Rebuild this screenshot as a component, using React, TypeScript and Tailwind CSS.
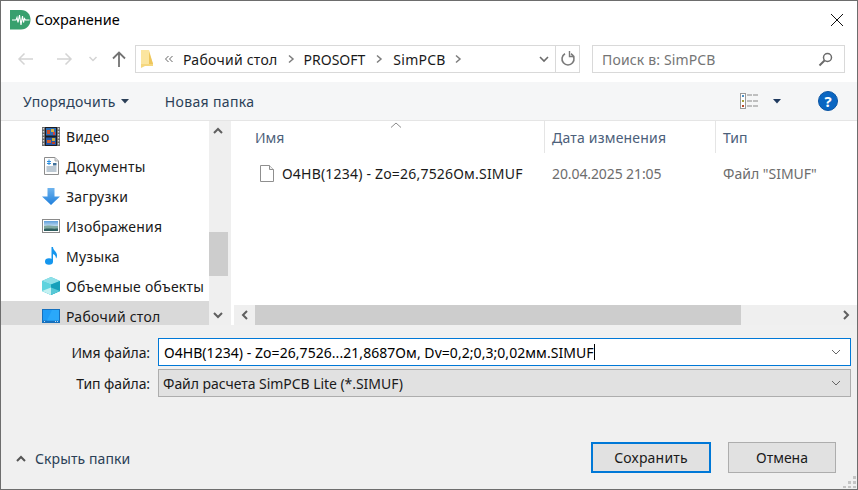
import React from "react";

const font = { fontFamily: '"Noto Sans", "Open Sans", sans-serif' };

const Logo = () => (
  <svg width="21" height="20" viewBox="0 0 21 20">
    <path d="M0 0H11C17 0 20.500 4.500 20.500 9.500C20.500 15 17 19.500 11 19.500H0Z" fill="#38a06e" />
    <path d="M2 10H6L7 7.500L8 12.500L9.500 5L11 15L12.500 6L13.500 12.500L14.500 8.500L15.500 10H19.500" fill="none" stroke="#fff" strokeWidth="1.100" />
  </svg>
);

const Chevron = ({ up = false, color = "#555", w = 1.6, size = 12 }: { up?: boolean; color?: string; w?: number; size?: number }) => (
  <svg width={size} height={size} viewBox="0 0 12 12">
    <path d={up ? "M2 8L6 4L10 8" : "M2 4L6 8L10 4"} fill="none" stroke={color} strokeWidth={w} />
  </svg>
);

const Crumb = ({ extra = "mx-[9px]" }: { extra?: string }) => (
  <svg width="8" height="10" viewBox="0 0 8 10" className={extra}>
    <path d="M2 1.500L6 5L2 8.500" fill="none" stroke="#7d7d7d" strokeWidth="1.500" />
  </svg>
);

const VideoIcon = () => (
  <svg width="18" height="19" viewBox="0 0 18 19">
    <rect width="18" height="19" fill="#6a6a6a" />
    <rect x="3" y="0" width="12" height="19" fill="#1c1c22" />
    <rect x="4" y="1" width="10" height="7.500" fill="#2f6fb5" />
    <rect x="4" y="10.500" width="10" height="7.500" fill="#2458a8" />
    <rect x="5" y="3" width="3" height="4" fill="#c8502a" />
    <rect x="9" y="2" width="3" height="3" fill="#d9b23a" />
    <rect x="11" y="5" width="2" height="3" fill="#c44" />
    <rect x="5" y="13" width="4" height="3" fill="#d2602f" />
    <rect x="10" y="11" width="3" height="3" fill="#c8b040" />
    <rect x="10" y="15" width="3" height="2" fill="#b8402a" />
    <path d="M1.500 1V18M16.500 1V18" stroke="#d8d8d8" strokeWidth="1.400" strokeDasharray="1.500 1.500" />
  </svg>
);
const DocIcon = () => (
  <svg width="15" height="18" viewBox="0 0 15 18">
    <path d="M.5 .5H11L14.500 4V17.500H.5Z" fill="#fdfdfd" stroke="#8c8c8c" />
    <path d="M11 .5V4H14.500" fill="#d8dde2" stroke="#aaa" />
    <path d="M3 4.500H7M3 6.500H7" stroke="#2d8fe0" strokeWidth="1.100" />
    <path d="M5 2.500V8" stroke="#2d8fe0" />
    <rect x="9" y="6" width="3.500" height="2.500" fill="#3f6f98" />
    <path d="M2.500 10H12.500M2.500 12H12.500M2.500 14H12.500" stroke="#7a93a8" />
  </svg>
);
const DownIcon = () => (
  <svg width="18" height="17" viewBox="0 0 18 17">
    <defs>
      <linearGradient id="dn" x1="0" y1="0" x2="0" y2="1">
        <stop offset="0" stopColor="#6fb4ee" />
        <stop offset="1" stopColor="#1f7fdc" />
      </linearGradient>
    </defs>
    <path d="M5.500 0H12.500V8.500H18L9 17L0 8.500H5.500Z" fill="url(#dn)" />
  </svg>
);
const ImgIcon = () => (
  <svg width="18" height="14" viewBox="0 0 18 14">
    <defs>
      <linearGradient id="sky" x1="0" y1="0" x2="0" y2="1">
        <stop offset="0" stopColor="#5f9fdc" />
        <stop offset="1" stopColor="#cfe4f2" />
      </linearGradient>
    </defs>
    <rect x=".5" y=".5" width="17" height="13" fill="#fff" stroke="#8a8a8a" />
    <rect x="2" y="2" width="14" height="6" fill="url(#sky)" />
    <path d="M2 7C6 5.500 11 7.500 16 7V12H2Z" fill="#7fa8a0" />
    <path d="M2 10C6 9 11 10 16 9.500V12H2Z" fill="#2f5f60" />
  </svg>
);
const MusicIcon = () => (
  <svg width="12" height="18" viewBox="0 0 12 18">
    <ellipse cx="4" cy="14.500" rx="4" ry="3.300" fill="#1596ee" />
    <path d="M6.500 15V0H8C8 3.500 12 4.500 12 8.500C12 10 11.500 11 11 11.500C11 9 9.500 7.500 8 7V15Z" fill="#1596ee" />
  </svg>
);
const CubeIcon = () => (
  <svg width="18" height="18" viewBox="0 0 18 18">
    <path d="M9 0L18 4V14L9 18L0 14V4Z" fill="#3fc3d3" />
    <path d="M9 0L18 4L9 7.500L0 4Z" fill="#8fe0e8" />
    <path d="M9 7.500L18 4V14L9 18Z" fill="#17a0ba" />
    <path d="M0 4L9 7.500V18L0 14Z" fill="#5ed3de" />
    <path d="M0 14L9 10.500V18Z" fill="#c4f1f2" />
    <path d="M18 14L9 10.500V18Z" fill="#57c8d6" />
  </svg>
);
const DesktopIcon = () => (
  <svg width="18" height="14" viewBox="0 0 18 14">
    <rect x="0" y="0" width="18" height="14" fill="#1670bd" />
    <rect x="1" y="1" width="16" height="10.500" fill="#1f9cf6" />
    <path d="M10 1H17V11.500H5Z" fill="#2aa8fa" />
    <path d="M13 12.500H13.800M15 12.500H15.800M2 12.500H2.800" stroke="#e8f4fc" />
  </svg>
);

const navItems: [string, React.ReactNode][] = [
  ["Видео", <VideoIcon />],
  ["Документы", <DocIcon />],
  ["Загрузки", <DownIcon />],
  ["Изображения", <ImgIcon />],
  ["Музыка", <MusicIcon />],
  ["Объемные объекты", <CubeIcon />],
  ["Рабочий стол", <DesktopIcon />],
];

export default function App() {
  return (
    <div style={font} className="w-[858px] h-[490px] border border-[#6d6d6d] bg-[#f0f0f0] flex flex-col overflow-hidden text-[14px] text-[#1a1a1a] relative">
      {/* title */}
      <div className="h-[38px] shrink-0 bg-white flex items-center pl-[9px]">
        <Logo />
        <span className="ml-[4px] text-[14.500px] text-black">Сохранение</span>
        <div className="ml-auto mr-[13px]">
          <svg width="14" height="14" viewBox="0 0 14 14">
            <path d="M1 1L13 13M13 1L1 13" stroke="#111" strokeWidth="1" />
          </svg>
        </div>
      </div>

      {/* nav */}
      <div className="h-[43px] shrink-0 bg-white flex items-start pt-[6px]">
        <div className="w-[134px] h-[28px] flex items-center shrink-0 pl-[16px]">
          <svg width="17" height="14" viewBox="0 0 17 14"><path d="M16 7H2M7.500 1.500L2 7L7.500 12.500" fill="none" stroke="#d4d4d4" strokeWidth="1.500" /></svg>
          <svg width="17" height="14" viewBox="0 0 17 14" className="ml-[22px]"><path d="M1 7H15M9.500 1.500L15 7L9.500 12.500" fill="none" stroke="#d4d4d4" strokeWidth="1.500" /></svg>
          <svg width="10" height="8" viewBox="0 0 10 8" className="ml-[15px]"><path d="M1.500 2L5 5.500L8.500 2" fill="none" stroke="#d4d4d4" strokeWidth="1.500" /></svg>
          <svg width="14" height="17" viewBox="0 0 14 17" className="ml-[14px]"><path d="M7 16V2M1 7.500L7 1.500L13 7.500" fill="none" stroke="#737373" strokeWidth="1.800" /></svg>
        </div>
        <div className="w-[445px] h-[28px] border border-[#d9d9d9] flex items-center shrink-0">
          <svg width="13" height="18" viewBox="0 0 13 18" className="ml-[5px]">
            <path d="M0 0H8L12 14V16H4L0 18Z" fill="#f5d77e" />
            <path d="M0 0H8V14H0Z" fill="#fbe59f" />
            <path d="M8 2L12 14H8Z" fill="#eec65c" />
          </svg>
          <svg width="10" height="10" viewBox="0 0 10 10" className="ml-[10px]">
            <path d="M4.500 2L1.500 5L4.500 8M8.500 2L5.500 5L8.500 8" fill="none" stroke="#666" strokeWidth="1" />
          </svg>
          <span className="ml-[9px] tracking-[0.25px]">Рабочий стол</span>
          <Crumb />
          <span>PROSOFT</span>
          <Crumb extra="ml-[10px] mr-[10px]" />
          <span className="tracking-[0.25px]">SimPCB</span>
          <Crumb extra="ml-[8px]" />
          <div className="ml-auto h-full flex items-center">
            <Chevron color="#6b6b6b" size={12} />
            <div className="ml-[5px] w-[24px] h-full border-l border-[#d9d9d9] flex items-center justify-center">
              <svg width="16" height="16" viewBox="0 0 16 16">
                <path d="M5 2.800A6 6 0 1 0 11 2.800" fill="none" stroke="#7a7a7a" strokeWidth="1.600" />
                <path d="M9.500 0V5.500H14.500" fill="none" stroke="#7a7a7a" strokeWidth="1.400" />
              </svg>
            </div>
          </div>
        </div>
        <div className="ml-[12px] w-[253px] h-[28px] border border-[#d9d9d9] flex items-center pl-[9px] pr-[11px] text-[#757575]">
          <span className="tracking-[0.15px]">Поиск в: SimPCB</span>
          <svg width="15" height="15" viewBox="0 0 15 15" className="ml-auto">
            <circle cx="9.500" cy="5.500" r="4" fill="none" stroke="#6b6b6b" strokeWidth="1.500" />
            <path d="M6.500 8.500L1.500 13.500" stroke="#6b6b6b" strokeWidth="2" />
          </svg>
        </div>
      </div>

      {/* toolbar */}
      <div className="h-[39px] shrink-0 bg-[#f5f6f7] border-b border-[#e5e5e5] flex items-center pl-[22px] text-[#2b3f57]">
        <span className="tracking-[0.3px]">Упорядочить</span>
        <svg width="8" height="5" viewBox="0 0 8 5" className="ml-[5px]"><path d="M0 0H8L4 4.500Z" fill="#2b3f57" /></svg>
        <span className="ml-[36px] tracking-[0.35px]">Новая папка</span>
        <div className="ml-auto flex items-center">
          <svg width="20" height="16" viewBox="0 0 20 16">
            <rect x=".5" y=".5" width="5" height="15" fill="#fff" stroke="#999" />
            <rect x="2" y="2" width="2" height="2" fill="#4d8fc4" />
            <rect x="2" y="7" width="2" height="2" fill="#a8a03a" />
            <rect x="2" y="12" width="2" height="2" fill="#b84a2a" />
            <path d="M7 2H19M7 8H19M7 13H19" stroke="#888" strokeDasharray="5 1" />
          </svg>
          <svg width="8" height="5" viewBox="0 0 8 5" className="ml-[13px]"><path d="M0 0H8L4 4.500Z" fill="#1f3a5f" /></svg>
          <div className="ml-[37px] mr-[19px] w-[20px] h-[20px] rounded-full bg-[#0a66c2] border border-[#0b55a3] text-white text-[15px] font-bold flex items-center justify-center leading-none">?</div>
        </div>
      </div>

      {/* panes */}
      <div className="h-[204px] shrink-0 flex bg-white">
        <div className="w-[208px] shrink-0 overflow-hidden tracking-[0.25px]">
          {navItems.map(([label, icon], i) => (
            <div key={label} className={`h-[30px] flex items-center ${i === 6 ? "bg-[#d9d9d9]" : ""}`}>
              <div className="w-[18px] ml-[41px] flex items-center justify-center">{icon}</div>
              <span className="ml-[6px] whitespace-nowrap">{label}</span>
            </div>
          ))}
        </div>
        <div className="w-[22px] shrink-0 bg-[#efefef] flex flex-col items-start justify-between relative py-[4px] pl-[3px]">
          <Chevron up color="#5f5f5f" w={2} />
          <div className="absolute left-0 w-[19px] top-[111px] h-[44px] bg-[#cdcdcd]" />
          <Chevron color="#5f5f5f" w={2} />
        </div>
        <div className="flex-1 flex flex-col ml-[3px] min-w-0">
          <div className="flex-1 min-h-0">
            <div className="h-[32px] flex text-[#4c607a] relative">
              <svg width="12" height="6" viewBox="0 0 12 6" className="absolute left-[156px] top-[1px]"><path d="M1 5.500L6 1L11 5.500" fill="none" stroke="#8a8a8a" /></svg>
              <div className="w-[311px] pl-[21px] flex items-center border-r border-[#e5e5e5]">Имя</div>
              <div className="w-[171px] pl-[7px] flex items-center border-r border-[#e5e5e5] tracking-[0.2px]">Дата изменения</div>
              <div className="pl-[7px] flex items-center">Тип</div>
            </div>
            <div className="h-[22px] mt-[9px] flex items-center">
              <div className="w-[48px] shrink-0 flex justify-end pr-[8px]">
                <svg width="14" height="17" viewBox="0 0 14 17">
                  <path d="M.5 .5H9.500L13.500 4.500V16.500H.5Z" fill="#fff" stroke="#8f8f8f" />
                  <path d="M9.500 .5V4.500H13.500" fill="#eee" stroke="#8f8f8f" />
                </svg>
              </div>
              <div className="w-[270px] shrink-0 whitespace-nowrap tracking-[0.2px]">О4НВ(1234) - Zo=26,7526Ом.SIMUF</div>
              <div className="w-[171px] shrink-0 text-[#6d6d6d] whitespace-nowrap tracking-[-0.1px]">20.04.2025 21:05</div>
              <div className="text-[#6d6d6d] whitespace-nowrap">Файл "SIMUF"</div>
            </div>
          </div>
          <div className="h-[20px] shrink-0 bg-[#efefef] flex items-center">
            <div className="w-[21px] flex justify-center shrink-0">
              <svg width="12" height="12" viewBox="0 0 12 12"><path d="M8 2L4 6L8 10" fill="none" stroke="#5f5f5f" strokeWidth="2" /></svg>
            </div>
            <div className="w-[486px] h-full bg-[#cdcdcd] shrink-0" />
            <div className="ml-auto mr-[5px]">
              <svg width="12" height="12" viewBox="0 0 12 12"><path d="M4 2L8 6L4 10" fill="none" stroke="#5f5f5f" strokeWidth="2" /></svg>
            </div>
          </div>
        </div>
      </div>

      {/* form */}
      <div className="flex-1 flex flex-col">
        <div className="mt-[13px] h-[28px] flex items-center">
          <span className="w-[150px] text-right pr-[1px] tracking-[-0.1px]">Имя файла:</span>
          <div className="ml-[7px] w-[693px] h-[28px] border border-[#0078d7] bg-white flex items-center pl-[5px] pr-[8px]">
            <span className="whitespace-nowrap text-black tracking-[0.05px]">О4НВ(1234) - Zo=26,7526...21,8687Ом, Dv=0,2;0,3;0,02мм.SIMUF</span>
            <span className="w-[1px] h-[16px] bg-black" />
            <span className="ml-auto"><Chevron color="#666" w={1} /></span>
          </div>
        </div>
        <div className="mt-[3px] h-[28px] flex items-center">
          <span className="w-[150px] text-right pr-[1px] tracking-[-0.1px]">Тип файла:</span>
          <div className="ml-[7px] w-[693px] h-[28px] border border-[#adadad] bg-[#e1e1e1] flex items-center pl-[4px] pr-[8px]">
            <span className="whitespace-nowrap tracking-[-0.05px]">Файл расчета SimPCB Lite (*.SIMUF)</span>
            <span className="ml-auto"><Chevron color="#666" w={1} /></span>
          </div>
        </div>
        <div className="flex-1 flex items-start pl-[14px]">
          <div className="mt-[51px] flex items-center">
            <Chevron up color="#555" w={2} size={12} />
            <span className="ml-[8px] text-[#2b3f57] tracking-[0.1px]">Скрыть папки</span>
          </div>
          <div className="ml-auto mt-[45px] flex items-start">
            <button className="w-[120px] h-[31px] border-2 border-[#0078d7] bg-[#e1e1e1] tracking-[0.2px]">Сохранить</button>
            <button className="ml-[17px] w-[108px] h-[31px] border border-[#adadad] bg-[#e1e1e1]">Отмена</button>
          </div>
          <div className="w-[21px] shrink-0" />
        </div>
      </div>
      <svg width="14" height="14" viewBox="0 0 14 14" className="absolute right-0 bottom-[1px]">
        <path d="M10 2h3v3h-3zM5 7h3v3H5zM10 7h3v3h-3zM0 12h3v2H0zM5 12h3v2H5zM10 12h3v2h-3z" fill="#c4c4c4" />
      </svg>
    </div>
  );
}
